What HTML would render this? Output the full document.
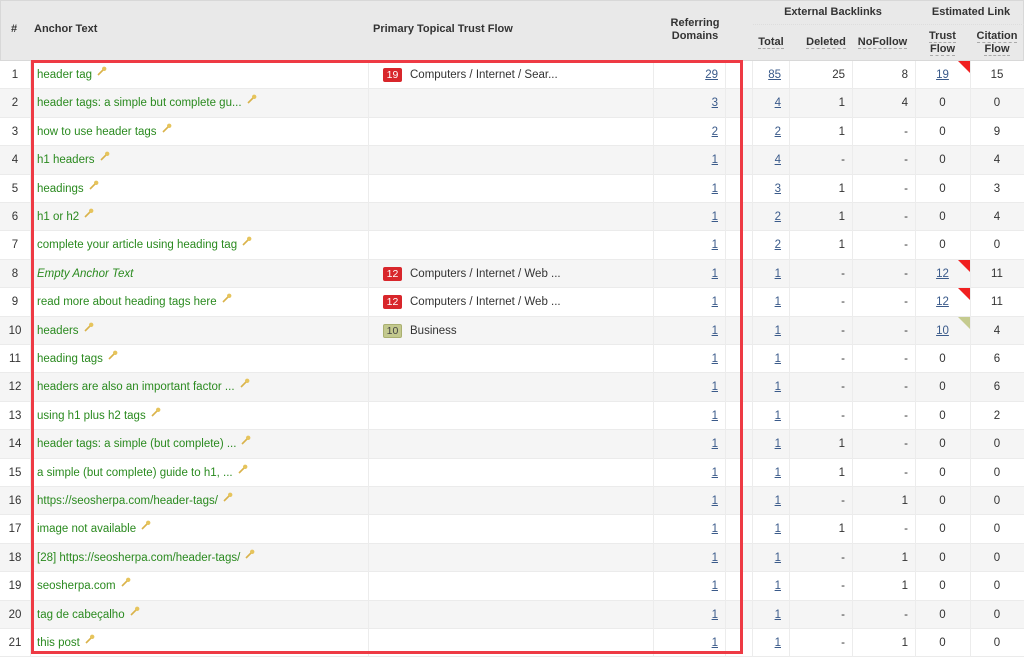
<!DOCTYPE html>
<html><head><meta charset="utf-8"><style>
*{margin:0;padding:0;box-sizing:border-box}
body{width:1024px;height:657px;overflow:hidden;background:#fff;font-family:"Liberation Sans","DejaVu Sans",sans-serif;font-size:11.5px;color:#333;position:relative}
.hd{position:absolute;left:0;top:0;width:1024px;height:61px;background:#e9e9e9;border:1px solid #d8d8d8}
.h{position:absolute;font-weight:bold;font-size:11px;color:#333;text-align:center;line-height:13px}
.dl{border-bottom:1px dashed #aaa}
.r{position:absolute;left:0;width:1024px;height:28.4px;border-bottom:1px solid #ebebeb;line-height:28px}
.r:nth-child(even){background:#f5f5f5}
.r span{position:absolute;top:0;height:28px}
.n{left:0;width:30px;text-align:center}
.a{left:37px;color:#2a8a1f;white-space:nowrap}
.k{display:inline-block;margin-left:5px;vertical-align:2px}
.t{left:383px;color:#333}
.b{display:inline-block;width:19px;height:14px;line-height:14px;border-radius:2px;color:#fff;font-size:10.5px;font-style:normal;text-align:center;margin-right:8px;background:#d8262b;vertical-align:0}
.b.g{background:#c3c98e;color:#444;border:1px solid #aab070;line-height:12px}
.rd{left:653px;width:65px;text-align:right}
.to{left:753px;width:28px;text-align:right}
.de{left:790px;width:55px;text-align:right}
.nf{left:852px;width:56px;text-align:right}
.tf{left:915px;width:55px;text-align:center}
.cf{left:970px;width:54px;text-align:center}
u{color:#3a5a8a}
.tri{position:absolute;right:0;top:0;width:0;height:0;border-top:12px solid #f02020;border-left:12px solid transparent}
.tri.o{border-top-color:#c5cb8f}
.vl{position:absolute;top:61px;height:596px;width:1px;background:#ececec}
.red{position:absolute;left:31px;top:60px;width:712px;height:594px;border:3px solid #ee3a44}
</style></head><body>
<div class="hd"></div>
<div class="h" style="left:11px;top:23px">#</div>
<div class="h" style="left:34px;top:23px">Anchor Text</div>
<div class="h" style="left:373px;top:23px">Primary Topical Trust Flow</div>
<div class="h" style="left:660px;top:17px;width:70px">Referring<br>Domains</div>
<div class="h" style="left:753px;top:6px;width:160px">External Backlinks</div>
<div class="h" style="left:918px;top:6px;width:106px">Estimated Link</div>
<div style="position:absolute;left:753px;top:24px;width:271px;border-top:1px dotted #ddd"></div>
<div class="h" style="left:753px;top:36px;width:36px"><span class="dl">Total</span></div>
<div class="h" style="left:800px;top:36px;width:52px"><span class="dl">Deleted</span></div>
<div class="h" style="left:855px;top:36px;width:55px"><span class="dl">NoFollow</span></div>
<div class="h" style="left:915px;top:30px;width:55px"><span class="dl">Trust<br>Flow</span></div>
<div class="h" style="left:970px;top:30px;width:54px"><span class="dl">Citation<br>Flow</span></div>

<div style="position:absolute;left:0;top:61px">
<div class="r" style="top:0px"><span class="n">1</span><span class="a">header tag<svg class="k" width="10" height="10"><path d="M1 9L6 4" stroke="#d9b24a" stroke-width="1.6"/><circle cx="7.2" cy="2.8" r="2.2" fill="#e6c45c"/></svg></span><span class="t"><i class="b">19</i>Computers / Internet / Sear...</span><span class="rd"><u>29</u></span><span class="to"><u>85</u></span><span class="de">25</span><span class="nf">8</span><span class="tf"><u>19</u><i class="tri"></i></span><span class="cf">15</span></div>
<div class="r" style="top:28.4px"><span class="n">2</span><span class="a">header tags: a simple but complete gu...<svg class="k" width="10" height="10"><path d="M1 9L6 4" stroke="#d9b24a" stroke-width="1.6"/><circle cx="7.2" cy="2.8" r="2.2" fill="#e6c45c"/></svg></span><span class="rd"><u>3</u></span><span class="to"><u>4</u></span><span class="de">1</span><span class="nf">4</span><span class="tf">0</span><span class="cf">0</span></div>
<div class="r" style="top:56.8px"><span class="n">3</span><span class="a">how to use header tags<svg class="k" width="10" height="10"><path d="M1 9L6 4" stroke="#d9b24a" stroke-width="1.6"/><circle cx="7.2" cy="2.8" r="2.2" fill="#e6c45c"/></svg></span><span class="rd"><u>2</u></span><span class="to"><u>2</u></span><span class="de">1</span><span class="nf">-</span><span class="tf">0</span><span class="cf">9</span></div>
<div class="r" style="top:85.2px"><span class="n">4</span><span class="a">h1 headers<svg class="k" width="10" height="10"><path d="M1 9L6 4" stroke="#d9b24a" stroke-width="1.6"/><circle cx="7.2" cy="2.8" r="2.2" fill="#e6c45c"/></svg></span><span class="rd"><u>1</u></span><span class="to"><u>4</u></span><span class="de">-</span><span class="nf">-</span><span class="tf">0</span><span class="cf">4</span></div>
<div class="r" style="top:113.6px"><span class="n">5</span><span class="a">headings<svg class="k" width="10" height="10"><path d="M1 9L6 4" stroke="#d9b24a" stroke-width="1.6"/><circle cx="7.2" cy="2.8" r="2.2" fill="#e6c45c"/></svg></span><span class="rd"><u>1</u></span><span class="to"><u>3</u></span><span class="de">1</span><span class="nf">-</span><span class="tf">0</span><span class="cf">3</span></div>
<div class="r" style="top:142px"><span class="n">6</span><span class="a">h1 or h2<svg class="k" width="10" height="10"><path d="M1 9L6 4" stroke="#d9b24a" stroke-width="1.6"/><circle cx="7.2" cy="2.8" r="2.2" fill="#e6c45c"/></svg></span><span class="rd"><u>1</u></span><span class="to"><u>2</u></span><span class="de">1</span><span class="nf">-</span><span class="tf">0</span><span class="cf">4</span></div>
<div class="r" style="top:170.4px"><span class="n">7</span><span class="a">complete your article using heading tag<svg class="k" width="10" height="10"><path d="M1 9L6 4" stroke="#d9b24a" stroke-width="1.6"/><circle cx="7.2" cy="2.8" r="2.2" fill="#e6c45c"/></svg></span><span class="rd"><u>1</u></span><span class="to"><u>2</u></span><span class="de">1</span><span class="nf">-</span><span class="tf">0</span><span class="cf">0</span></div>
<div class="r" style="top:198.8px"><span class="n">8</span><span class="a"><i>Empty Anchor Text</i></span><span class="t"><i class="b">12</i>Computers / Internet / Web ...</span><span class="rd"><u>1</u></span><span class="to"><u>1</u></span><span class="de">-</span><span class="nf">-</span><span class="tf"><u>12</u><i class="tri"></i></span><span class="cf">11</span></div>
<div class="r" style="top:227.2px"><span class="n">9</span><span class="a">read more about heading tags here<svg class="k" width="10" height="10"><path d="M1 9L6 4" stroke="#d9b24a" stroke-width="1.6"/><circle cx="7.2" cy="2.8" r="2.2" fill="#e6c45c"/></svg></span><span class="t"><i class="b">12</i>Computers / Internet / Web ...</span><span class="rd"><u>1</u></span><span class="to"><u>1</u></span><span class="de">-</span><span class="nf">-</span><span class="tf"><u>12</u><i class="tri"></i></span><span class="cf">11</span></div>
<div class="r" style="top:255.6px"><span class="n">10</span><span class="a">headers<svg class="k" width="10" height="10"><path d="M1 9L6 4" stroke="#d9b24a" stroke-width="1.6"/><circle cx="7.2" cy="2.8" r="2.2" fill="#e6c45c"/></svg></span><span class="t"><i class="b g">10</i>Business</span><span class="rd"><u>1</u></span><span class="to"><u>1</u></span><span class="de">-</span><span class="nf">-</span><span class="tf"><u>10</u><i class="tri o"></i></span><span class="cf">4</span></div>
<div class="r" style="top:284px"><span class="n">11</span><span class="a">heading tags<svg class="k" width="10" height="10"><path d="M1 9L6 4" stroke="#d9b24a" stroke-width="1.6"/><circle cx="7.2" cy="2.8" r="2.2" fill="#e6c45c"/></svg></span><span class="rd"><u>1</u></span><span class="to"><u>1</u></span><span class="de">-</span><span class="nf">-</span><span class="tf">0</span><span class="cf">6</span></div>
<div class="r" style="top:312.4px"><span class="n">12</span><span class="a">headers are also an important factor ...<svg class="k" width="10" height="10"><path d="M1 9L6 4" stroke="#d9b24a" stroke-width="1.6"/><circle cx="7.2" cy="2.8" r="2.2" fill="#e6c45c"/></svg></span><span class="rd"><u>1</u></span><span class="to"><u>1</u></span><span class="de">-</span><span class="nf">-</span><span class="tf">0</span><span class="cf">6</span></div>
<div class="r" style="top:340.8px"><span class="n">13</span><span class="a">using h1 plus h2 tags<svg class="k" width="10" height="10"><path d="M1 9L6 4" stroke="#d9b24a" stroke-width="1.6"/><circle cx="7.2" cy="2.8" r="2.2" fill="#e6c45c"/></svg></span><span class="rd"><u>1</u></span><span class="to"><u>1</u></span><span class="de">-</span><span class="nf">-</span><span class="tf">0</span><span class="cf">2</span></div>
<div class="r" style="top:369.2px"><span class="n">14</span><span class="a">header tags: a simple (but complete) ...<svg class="k" width="10" height="10"><path d="M1 9L6 4" stroke="#d9b24a" stroke-width="1.6"/><circle cx="7.2" cy="2.8" r="2.2" fill="#e6c45c"/></svg></span><span class="rd"><u>1</u></span><span class="to"><u>1</u></span><span class="de">1</span><span class="nf">-</span><span class="tf">0</span><span class="cf">0</span></div>
<div class="r" style="top:397.6px"><span class="n">15</span><span class="a">a simple (but complete) guide to h1, ...<svg class="k" width="10" height="10"><path d="M1 9L6 4" stroke="#d9b24a" stroke-width="1.6"/><circle cx="7.2" cy="2.8" r="2.2" fill="#e6c45c"/></svg></span><span class="rd"><u>1</u></span><span class="to"><u>1</u></span><span class="de">1</span><span class="nf">-</span><span class="tf">0</span><span class="cf">0</span></div>
<div class="r" style="top:426px"><span class="n">16</span><span class="a">https://seosherpa.com/header-tags/<svg class="k" width="10" height="10"><path d="M1 9L6 4" stroke="#d9b24a" stroke-width="1.6"/><circle cx="7.2" cy="2.8" r="2.2" fill="#e6c45c"/></svg></span><span class="rd"><u>1</u></span><span class="to"><u>1</u></span><span class="de">-</span><span class="nf">1</span><span class="tf">0</span><span class="cf">0</span></div>
<div class="r" style="top:454.4px"><span class="n">17</span><span class="a">image not available<svg class="k" width="10" height="10"><path d="M1 9L6 4" stroke="#d9b24a" stroke-width="1.6"/><circle cx="7.2" cy="2.8" r="2.2" fill="#e6c45c"/></svg></span><span class="rd"><u>1</u></span><span class="to"><u>1</u></span><span class="de">1</span><span class="nf">-</span><span class="tf">0</span><span class="cf">0</span></div>
<div class="r" style="top:482.8px"><span class="n">18</span><span class="a">[28] https://seosherpa.com/header-tags/<svg class="k" width="10" height="10"><path d="M1 9L6 4" stroke="#d9b24a" stroke-width="1.6"/><circle cx="7.2" cy="2.8" r="2.2" fill="#e6c45c"/></svg></span><span class="rd"><u>1</u></span><span class="to"><u>1</u></span><span class="de">-</span><span class="nf">1</span><span class="tf">0</span><span class="cf">0</span></div>
<div class="r" style="top:511.2px"><span class="n">19</span><span class="a">seosherpa.com<svg class="k" width="10" height="10"><path d="M1 9L6 4" stroke="#d9b24a" stroke-width="1.6"/><circle cx="7.2" cy="2.8" r="2.2" fill="#e6c45c"/></svg></span><span class="rd"><u>1</u></span><span class="to"><u>1</u></span><span class="de">-</span><span class="nf">1</span><span class="tf">0</span><span class="cf">0</span></div>
<div class="r" style="top:539.6px"><span class="n">20</span><span class="a">tag de cabeçalho<svg class="k" width="10" height="10"><path d="M1 9L6 4" stroke="#d9b24a" stroke-width="1.6"/><circle cx="7.2" cy="2.8" r="2.2" fill="#e6c45c"/></svg></span><span class="rd"><u>1</u></span><span class="to"><u>1</u></span><span class="de">-</span><span class="nf">-</span><span class="tf">0</span><span class="cf">0</span></div>
<div class="r" style="top:568px"><span class="n">21</span><span class="a">this post<svg class="k" width="10" height="10"><path d="M1 9L6 4" stroke="#d9b24a" stroke-width="1.6"/><circle cx="7.2" cy="2.8" r="2.2" fill="#e6c45c"/></svg></span><span class="rd"><u>1</u></span><span class="to"><u>1</u></span><span class="de">-</span><span class="nf">1</span><span class="tf">0</span><span class="cf">0</span></div>
</div>
<div class="vl" style="left:30px"></div><div class="vl" style="left:368px"></div><div class="vl" style="left:653px"></div><div class="vl" style="left:725px"></div><div class="vl" style="left:752px"></div><div class="vl" style="left:789px"></div><div class="vl" style="left:852px"></div><div class="vl" style="left:915px"></div><div class="vl" style="left:970px"></div>
<div class="red"></div>
</body></html>
